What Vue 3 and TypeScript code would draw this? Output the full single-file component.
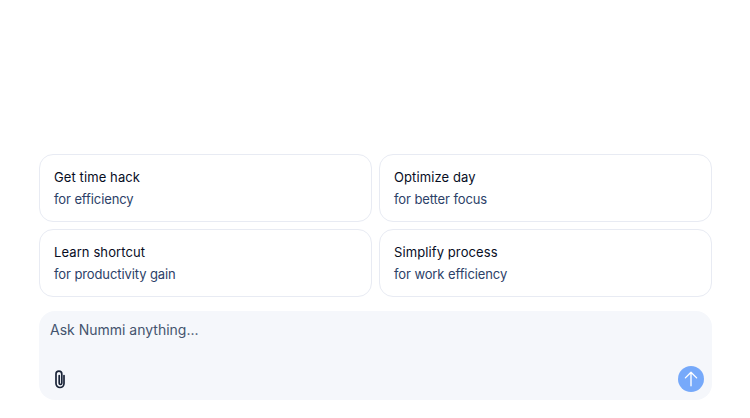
<script setup lang="ts">
const cards = [
  { title: 'Get time hack', sub: 'for efficiency' },
  { title: 'Optimize day', sub: 'for better focus' },
  { title: 'Learn shortcut', sub: 'for productivity gain' },
  { title: 'Simplify process', sub: 'for work efficiency' },
]
</script>

<template>
  <div class="page">
    <div class="grid">
      <div v-for="c in cards" :key="c.title" class="card">
        <div class="title">{{ c.title }}</div>
        <div class="sub">{{ c.sub }}</div>
      </div>
    </div>
    <div class="composer">
      <div class="placeholder">Ask Nummi anything...</div>
      <div class="tools">
        <svg class="clip" width="20" height="20" viewBox="0 0 20 20" fill="none" stroke="#1a2438" stroke-width="1.7" stroke-linecap="round">
          <path d="M14 6.5v8a4 4 0 0 1-8 0V5a2.9 2.9 0 0 1 5.8 0v9.2a1.3 1.3 0 0 1-2.6 0V6.5" />
        </svg>
        <div class="send">
          <svg width="18" height="18" viewBox="0 0 24 24" fill="none" stroke="#fff" stroke-width="1.8" stroke-linecap="round" stroke-linejoin="round">
            <path d="M12 21V3M4.5 10.5 12 3l7.5 7.5" />
          </svg>
        </div>
      </div>
    </div>
  </div>
</template>

<style>
body { margin: 0; background: #fff; }
</style>

<style scoped>
.page {
  width: 750px;
  height: 418px;
  box-sizing: border-box;
  padding: 154px 38px 18px 39px;
  font-family: Inter, "Liberation Sans", sans-serif;
  display: flex;
  flex-direction: column;
}
.grid {
  display: grid;
  grid-template-columns: 1fr 1fr;
  gap: 7px 7px;
}
.card {
  height: 68px;
  box-sizing: border-box;
  border: 1px solid #e8ebf3;
  border-radius: 14px;
  padding: 13px 14px;
}
.title {
  font-size: 13px;
  font-weight: 400;
  line-height: 18px;
  letter-spacing: 0.1px;
  color: #070d1f;
}
.sub {
  margin-top: 4px;
  font-size: 13px;
  line-height: 18px;
  letter-spacing: -0.1px;
  color: #2c4168;
}
.composer {
  margin-top: 14px;
  height: 89px;
  box-sizing: border-box;
  background: #f5f7fb;
  border-radius: 16px;
  padding: 9px 8px 8px 11px;
  display: flex;
  flex-direction: column;
  justify-content: space-between;
}
.placeholder {
  font-size: 14px;
  line-height: 20px;
  color: #44546e;
}
.tools {
  display: flex;
  align-items: center;
  justify-content: space-between;
}
.send {
  width: 26px;
  height: 26px;
  border-radius: 50%;
  background: #76a9fa;
  display: flex;
  align-items: center;
  justify-content: center;
}
</style>
